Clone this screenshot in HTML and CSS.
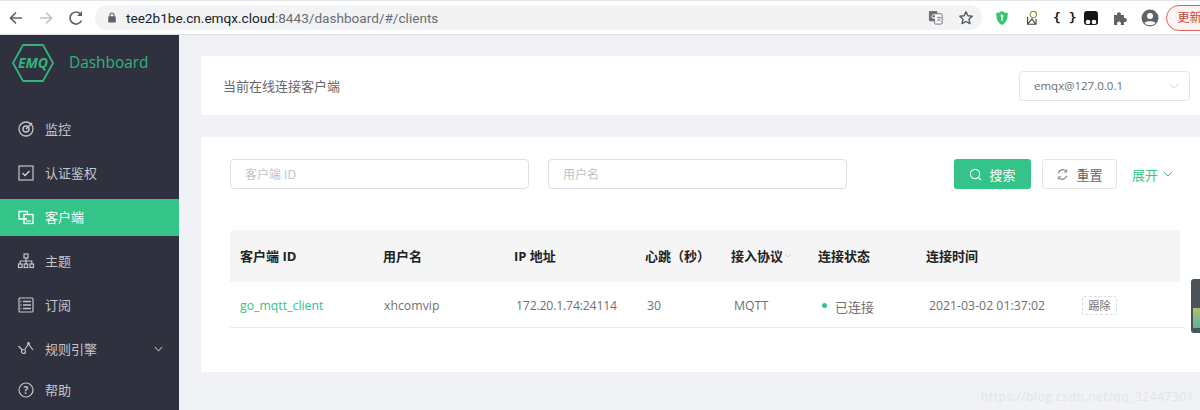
FILE: index.html
```html
<!DOCTYPE html>
<html lang="zh">
<head>
<meta charset="utf-8">
<title>Dashboard</title>
<link rel="stylesheet" href="styles.css">
</head>
<body>
<header class="chrome">
  <div class="nav-icons">
    <svg class="ic20" viewBox="0 0 20 20"><path d="M16 10H5M10 4.5 4.5 10l5.5 5.5" fill="none" stroke="#5f6368" stroke-width="1.7"/></svg>
    <svg class="ic20" viewBox="0 0 20 20"><path d="M4 10h11M10 4.500 15.500 10 10 15.500" fill="none" stroke="#c0c2c5" stroke-width="1.700"/></svg>
    <svg class="ic20" viewBox="0 0 20 20"><path d="M15.500 12.500A6 6 0 1 1 14.500 6" fill="none" stroke="#5f6368" stroke-width="1.700"/><path d="M16 3v5h-5z" fill="#5f6368"/></svg>
  </div>
  <div class="omnibox">
    <svg class="lock" viewBox="0 0 12 14"><path d="M3.500 6V4a2.500 2.500 0 0 1 5 0v2" fill="none" stroke="#5f6368" stroke-width="1.300"/><rect x="1.500" y="5.500" width="9" height="7.500" rx="1" fill="#5f6368"/></svg>
    <span class="url"><b class="host">tee2b1be.cn.emqx.cloud</b>:8443/dashboard/#/clients</span>
    <svg class="translate" viewBox="0 0 16 16"><rect x="1" y="1" width="9" height="11" rx="1" fill="#6d7074"/><rect x="7" y="4" width="8" height="11" rx="1" fill="#fff" stroke="#6d7074"/><path d="M7.500 5.500a2 2 0 1 0 .3 2.500H5.800" fill="none" stroke="#fff" stroke-width="1"/><path d="M9.500 8h4M11.500 7v1M13 8c-.5 2-2 3.500-3.500 4M10.500 9.500c.5 1 1.500 2 3 2.500" fill="none" stroke="#6d7074" stroke-width=".8"/></svg>
    <svg class="star" viewBox="0 0 16 16"><path d="m8 1.800 1.900 4 4.300.5-3.200 3 .9 4.300L8 11.500l-3.900 2.100.9-4.300-3.200-3 4.300-.5z" fill="none" stroke="#55585c" stroke-width="1.400" stroke-linejoin="round"/></svg>
  </div>
  <div class="extensions">
    <svg class="ext" viewBox="0 0 16 18"><path d="M8 1c2 1.500 4 2 6.500 2.200 0 6-1 10.800-6.500 13.800C2.500 14 1.500 9.200 1.500 3.200 4 3 6 2.500 8 1z" fill="#34c76b"/><circle cx="8" cy="6.500" r="1.500" fill="#fff"/><path d="M7.200 7h1.600v5H7.200z" fill="#fff"/></svg>
    <svg class="ext" viewBox="0 0 16 18"><circle cx="9.500" cy="5" r="3.500" fill="none" stroke="#7da33f" stroke-width="1.300"/><path d="M3 7.500V16h9.500v-6M3 16l5-6 4 6" fill="none" stroke="#3f4b3a" stroke-width="1.300"/></svg>
    <span class="braces">{ }</span>
    <svg class="ext" viewBox="0 0 16 16"><rect x="1" y="1" width="14" height="14" rx="3" fill="#15161a"/><circle cx="5" cy="12" r="2.300" fill="#fff"/><circle cx="11" cy="12" r="2.300" fill="#fff"/></svg>
    <svg class="ext" viewBox="0 0 16 16"><path d="M2 5h3.200a2 2 0 1 1 3.600 0H12v3.200a2 2 0 1 1 0 3.600V15H8.500a2 2 0 1 0-3 0H2z" fill="#5f6368"/></svg>
    <svg class="avatar" viewBox="0 0 18 18"><circle cx="9" cy="9" r="8.500" fill="#5f6368"/><circle cx="9" cy="7" r="3" fill="#fff"/><path d="M3.500 14c1.500-2.500 9.500-2.500 11 0-2.500 3-8.500 3-11 0z" fill="#fff"/></svg>
    <span class="update">更新</span>
  </div>
</header>

<div class="app">
  <aside class="sidebar">
    <div class="brand">
      <svg class="logo" viewBox="0 0 44 40"><path d="M12 2h20l10 18-10 18H12L2 20z" fill="none" stroke="#34b37e" stroke-width="1.800" stroke-linejoin="round"/><text x="22" y="25" text-anchor="middle" class="logo-text">EMQ</text></svg>
      <span class="brand-name">Dashboard</span>
    </div>
    <nav class="menu">
      <a class="item">
        <svg class="mi" viewBox="0 0 18 18"><circle cx="9" cy="9" r="7" fill="none" stroke="#c3c5ca" stroke-width="1.300"/><circle cx="9" cy="9" r="3" fill="none" stroke="#c3c5ca" stroke-width="1.500"/><path d="m9 9 6-6" stroke="#c3c5ca" stroke-width="1.500"/></svg>
        <span>监控</span>
      </a>
      <a class="item">
        <svg class="mi" viewBox="0 0 18 18"><rect x="2" y="2" width="14" height="14" fill="none" stroke="#c3c5ca" stroke-width="1.200"/><path d="m5.500 9 2.500 2.500 4.500-4.500" fill="none" stroke="#d5d7da" stroke-width="1.300"/></svg>
        <span>认证鉴权</span>
      </a>
      <a class="item active">
        <svg class="mi" viewBox="0 0 18 18"><path d="M10 11H2V3.500h8.500V6" fill="none" stroke="#fff" stroke-width="1.300"/><rect x="7" y="6.500" width="9" height="9" fill="none" stroke="#fff" stroke-width="1.300"/><path d="M9 13h5" stroke="#fff"/></svg>
        <span>客户端</span>
      </a>
      <a class="item">
        <svg class="mi" viewBox="0 0 18 18"><g fill="none" stroke="#c3c5ca" stroke-width="1.200"><rect x="7" y="2" width="4" height="4"/><rect x="1.500" y="12" width="3.500" height="3.500"/><rect x="7.200" y="12" width="3.500" height="3.500"/><rect x="13" y="12" width="3.500" height="3.500"/><path d="M9 6v6M3.200 12V9h11.600v3"/></g></svg>
        <span>主题</span>
      </a>
      <a class="item">
        <svg class="mi" viewBox="0 0 18 18"><rect x="2" y="2" width="14" height="14" rx="1" fill="none" stroke="#c3c5ca" stroke-width="1.200"/><path d="M6 5.500h8M6 9h8M6 12.500h8M3.500 5.500h1M3.500 9h1M3.500 12.500h1" stroke="#c3c5ca" stroke-width="1.300"/></svg>
        <span>订阅</span>
      </a>
      <a class="item">
        <svg class="mi" viewBox="0 0 18 18"><g fill="none" stroke="#c3c5ca" stroke-width="1.200"><path d="m1.500 6 3.800 4M8 9l3.500-5 4.500 6"/><circle cx="6.500" cy="11.500" r="2"/><circle cx="11.500" cy="3.500" r=".8"/></g></svg>
        <span>规则引擎</span>
        <svg class="caret" viewBox="0 0 10 6"><path d="m1 1 4 4 4-4" fill="none" stroke="#a9abb1" stroke-width="1.200"/></svg>
      </a>
      <a class="item last">
        <svg class="mi" viewBox="0 0 18 18"><circle cx="9" cy="9" r="7" fill="none" stroke="#c3c5ca" stroke-width="1.200"/><text x="9" y="12.500" text-anchor="middle" class="help-mark">?</text></svg>
        <span>帮助</span>
      </a>
    </nav>
  </aside>

  <main class="main">
    <section class="card head-card">
      <h1 class="title">当前在线连接客户端</h1>
      <div class="select">
        <span>emqx@127.0.0.1</span>
        <svg class="select-caret" viewBox="0 0 12 7"><path d="m1 1 5 5 5-5" fill="none" stroke="#c8cacd" stroke-width="1"/></svg>
      </div>
    </section>

    <section class="card body-card">
      <div class="filters">
        <div class="input">客户端 ID</div>
        <div class="input">用户名</div>
        <button class="btn primary">
          <svg class="btn-ic" viewBox="0 0 14 14"><circle cx="6.500" cy="6.500" r="5" fill="none" stroke="#fff" stroke-width="1.200"/><path d="m10 10 3 3" stroke="#fff" stroke-width="1.200"/></svg>
          <span>搜索</span>
        </button>
        <button class="btn plain">
          <svg class="btn-ic" viewBox="0 0 14 14"><path d="M2.500 5.500A5 5 0 0 1 11 3.500M11.500 8.500A5 5 0 0 1 3 10.500" fill="none" stroke="#666" stroke-width="1.100"/><path d="M11.500 1.500v3h-3M2.500 12.500v-3h3" fill="none" stroke="#666" stroke-width=".8"/></svg>
          <span>重置</span>
        </button>
        <a class="expand">展开
          <svg class="expand-caret" viewBox="0 0 12 7"><path d="m1 1 5 5 5-5" fill="none" stroke="#34b37e" stroke-width="1.100"/></svg>
        </a>
      </div>

      <div class="table">
        <div class="row header">
          <div>客户端 ID</div>
          <div>用户名</div>
          <div>IP 地址</div>
          <div>心跳（秒）</div>
          <div class="sortable">接入协议<svg class="sort" viewBox="0 0 8 5"><path d="m1 1 3 3 3-3" fill="none" stroke="#c4c6c9" stroke-width=".8"/></svg></div>
          <div>连接状态</div>
          <div>连接时间</div>
          <div></div>
        </div>
        <div class="row data">
          <div class="link">go_mqtt_client</div>
          <div class="d1">xhcomvip</div>
          <div class="d2 addr">172.20.1.74:24114</div>
          <div class="d2">30</div>
          <div class="d3">MQTT</div>
          <div class="d3 status"><i class="dot"></i><span class="status-text">已连接</span></div>
          <div class="d3">2021-03-02 01:37:02</div>
          <div><span class="kick">踢除</span></div>
        </div>
      </div>
    </section>
  </main>
</div>

<div class="widget"><i class="meter"></i></div>
<div class="watermark">https://blog.csdn.net/qq_32447301</div>
</body>
</html>
```

FILE: styles.css
```css
* { box-sizing: border-box; }
html, body { margin: 0; height: 410px; overflow: hidden; }
body {
  font-family: "Open Sans", "Noto Sans CJK SC", sans-serif;
  font-size: 13px;
  color: #666;
  background: #f0f2f5;
  position: relative;
}
svg { display: block; flex: none; }

/* browser chrome */
.chrome {
  height: 35px;
  background: #fff;
  border-top: 1px solid #e4e5e7;
  border-bottom: 1px solid #dfe1e3;
  display: flex;
  align-items: center;
  padding-left: 6px;
}
.nav-icons { display: flex; gap: 10px; width: 89px; flex: none; }
.ic20 { width: 20px; height: 20px; }
.omnibox {
  flex: none;
  width: 887px;
  height: 25px;
  border-radius: 13px;
  background: #f1f3f4;
  display: flex;
  align-items: center;
  padding-left: 12px;
  padding-right: 8px;
}
.lock { width: 10px; height: 13px; margin-right: 9px; }
.url {
  font-family: "Roboto", sans-serif;
  font-size: 13.600px;
  color: #6b6e72;
  flex: 1;
}
.host { font-weight: 400; color: #202124; }
.translate { width: 15px; height: 15px; margin-right: 15px; }
.star { width: 16px; height: 16px; }
.extensions { display: flex; align-items: center; flex: 1; min-width: 0; padding-left: 12px; }
.ext { width: 16px; height: 16px; margin-right: 13.500px; flex: none; }
.braces { font: 700 13px "DejaVu Sans Mono", monospace; color: #222; width: 16px; margin-right: 13.500px; white-space: nowrap; flex: none; }
.avatar { width: 18px; height: 18px; margin-left: -1px; margin-right: 7px; flex: none; }
.update {
  flex: none;
  width: 60px;
  height: 26px;
  border: 1px solid #d9635a;
  border-radius: 13px;
  background: #fdf3f2;
  color: #c5483f;
  font-size: 12px;
  line-height: 24px;
  padding-left: 11px;
}

/* app */
.app { display: flex; height: 375px; }
.sidebar { width: 179px; flex: none; background: #2f323e; color: #c3c5ca; }
.brand { display: flex; align-items: center; height: 54px; padding: 0 0 0 11px; gap: 14px; }
.logo { width: 44px; height: 40px; margin-top: 1px; }
.logo-text { font: italic 700 14px "Open Sans", sans-serif; fill: #34b37e; }
.brand-name { font-size: 15.400px; color: #34b37e; }
.menu { display: flex; flex-direction: column; padding-top: 22px; }
.item {
  display: flex;
  align-items: center;
  height: 37px;
  margin-bottom: 7px;
  padding: 0 0 2px 17px;
  gap: 10px;
  font-size: 13px;
}
.item.last { margin-top: -3px; }
.item.active { background: #34c388; color: #fff; }
.mi { width: 18px; height: 18px; }
.help-mark { font: 700 10px "Open Sans", sans-serif; fill: #c3c5ca; }
.caret { width: 9px; height: 6px; margin-left: auto; margin-right: 16px; }

/* main */
.main { flex: 1; padding: 21px 0 0 22px; display: flex; flex-direction: column; gap: 22px; min-width: 0; }
.card { background: #fff; }
.head-card {
  height: 59px;
  display: flex;
  align-items: center;
  justify-content: space-between;
  padding: 0 10px 0 22px;
}
.title { margin: 0; font-size: 13px; font-weight: 400; color: #666; }
.select {
  width: 171px;
  height: 30px;
  border: 1px solid #e3e4e6;
  border-radius: 4px;
  display: flex;
  align-items: center;
  justify-content: space-between;
  padding: 0 10px 0 14px;
  font-size: 11.500px;
  color: #6d6d6d;
}
.select-caret { width: 10px; height: 6px; }
.body-card { height: 235px; padding: 22px 0 0 29px; }
.filters { display: flex; align-items: flex-start; }
.input {
  width: 299px;
  height: 30px;
  margin-right: 19px;
  border: 1px solid #dcdfe3;
  border-radius: 4px;
  padding-left: 14px;
  line-height: 29px;
  font-size: 12px;
  color: #bfc2c6;
}
.input + .input { margin-right: 107px; }
.btn {
  font: inherit;
  height: 30px;
  border-radius: 3px;
  display: flex;
  align-items: center;
  justify-content: center;
  gap: 7px;
  padding: 0;
}
.btn-ic { width: 13px; height: 13px; }
.primary { width: 77px; background: #34c388; color: #fff; border: 0; margin-right: 11px; }
.plain { width: 75px; background: #fff; color: #666; border: 1px solid #e3e4e6; margin-right: 15px; }
.expand { display: flex; align-items: center; gap: 5px; color: #34c388; height: 30px; }
.expand-caret { width: 10px; height: 6px; }

/* table */
.table { margin-top: 41px; }
.row {
  display: grid;
  grid-template-columns: 143px 131px 131px 86px 87px 108px 155px 1fr;
  align-items: center;
  width: 954px;
}
.row > div { padding-left: 10px; white-space: nowrap; }
.header {
  width: 950px;
  height: 52px;
  padding-bottom: 2px;
  background: #f5f5f6;
  border-radius: 4px 4px 0 0;
  color: #222;
  font-weight: 700;
}
.sortable { display: flex; align-items: center; gap: 1px; }
.sort { width: 8px; height: 5px; }
.data { height: 46px; padding-top: 1px; border-bottom: 1px solid #e9ebee; font-size: 12.300px; color: #707070; }
.link { color: #34c388; }
.row > .d1 { padding-left: 11px; }
.row > .d2 { padding-left: 12px; }
.row > .d3 { padding-left: 13px; }
.addr { letter-spacing: -.2px; }
.status { display: flex; align-items: center; }
.dot { width: 5px; height: 5px; border-radius: 50%; background: #34c388; margin-right: 8px; margin-left: 1px; }
.status-text { font-size: 13px; margin-top: 2px; }
.kick {
  display: inline-block;
  margin-left: 1px;
  padding: 0 5.500px;
  height: 19px;
  line-height: 17px;
  font-size: 11px;
  border: 1px dashed #dcdcdc;
  border-radius: 2px;
}

/* overlays */
.widget {
  position: absolute;
  left: 1191px;
  top: 279px;
  width: 9px;
  height: 54px;
  background: #4d5459;
  border-radius: 3px 0 0 3px;
}
.meter {
  position: absolute;
  left: 2px;
  right: 0;
  bottom: 5px;
  height: 20px;
  background: linear-gradient(#b8bd6f, #57b597);
}
.watermark {
  position: absolute;
  right: 6px;
  top: 388px;
  font-size: 12px;
  letter-spacing: .55px;
  color: #e2e4e8;
  white-space: nowrap;
}
```
